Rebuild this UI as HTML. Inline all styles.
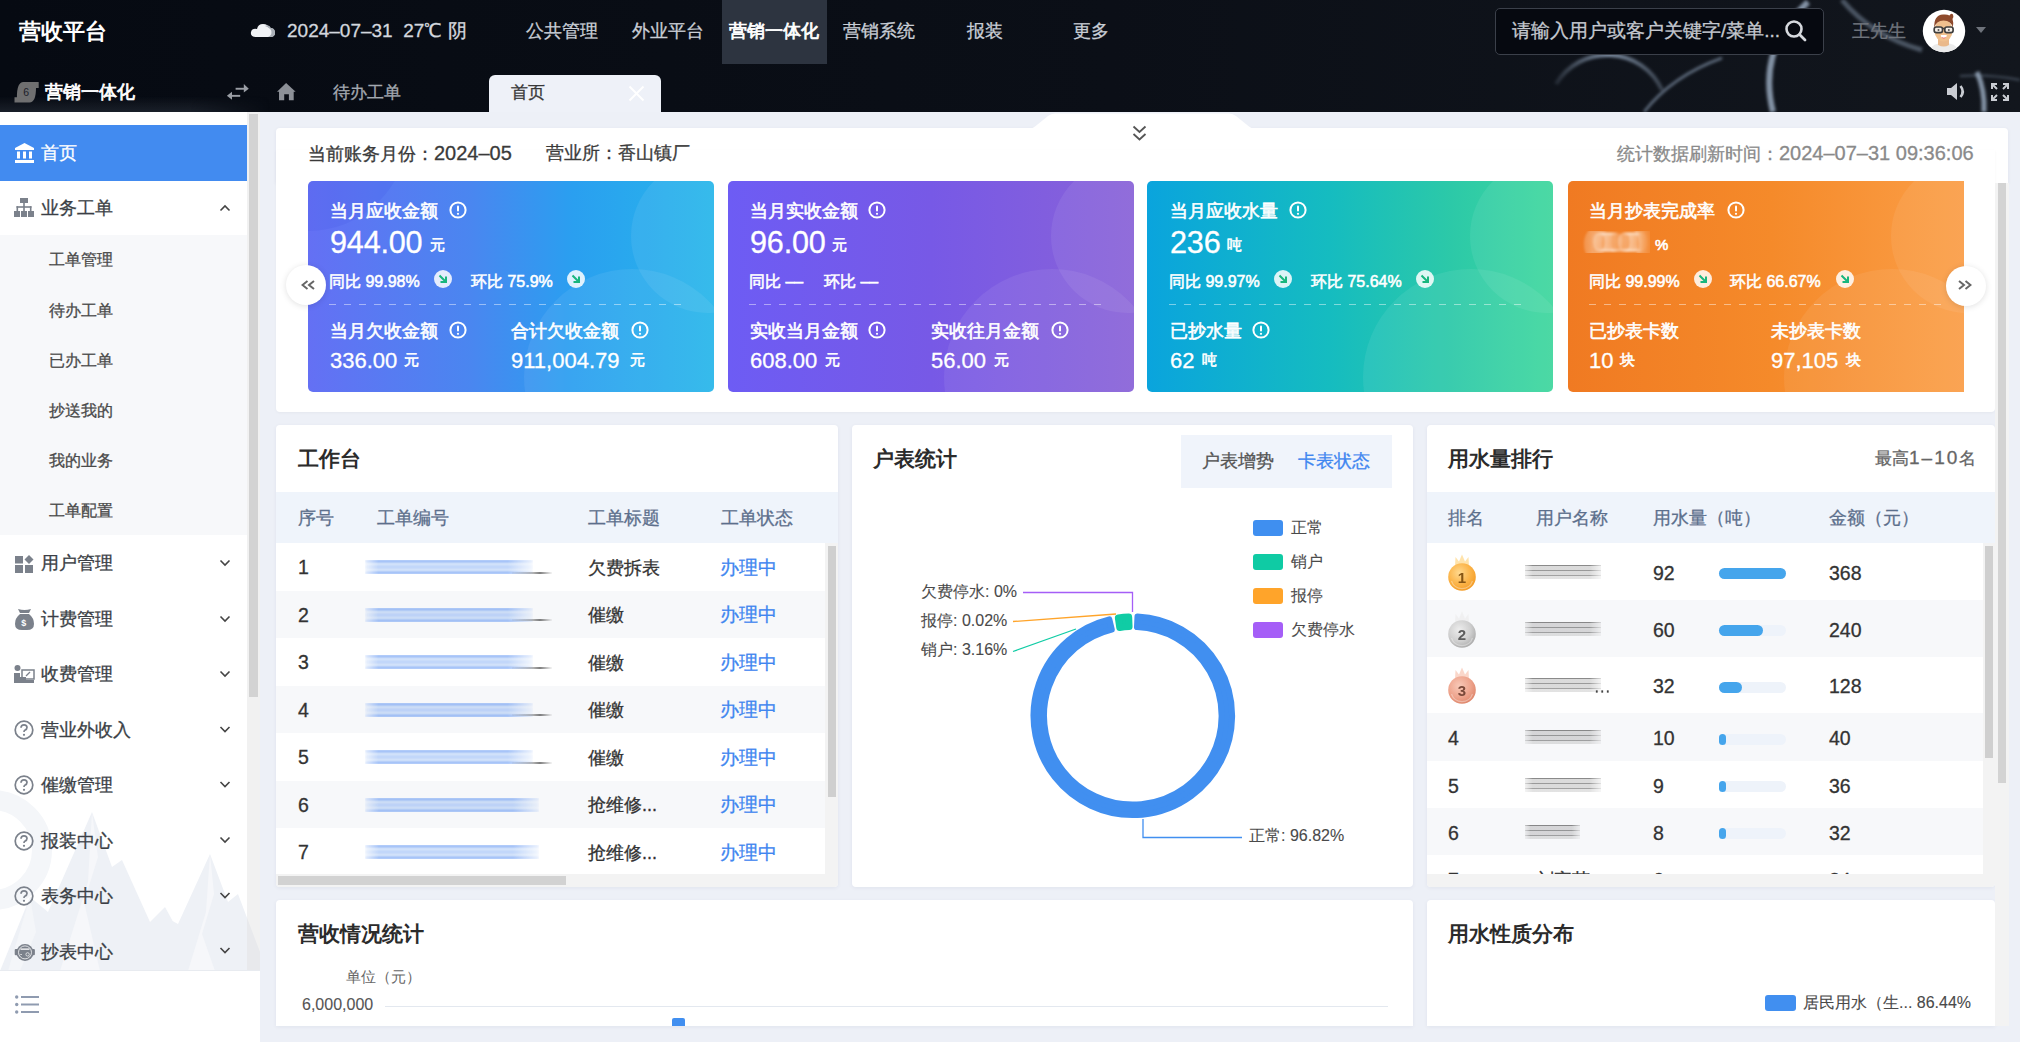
<!DOCTYPE html>
<html><head><meta charset="utf-8">
<style>
*{box-sizing:border-box;margin:0;padding:0}
html,body{width:2020px;height:1042px;overflow:hidden;background:#edf0f7;font-family:"Liberation Sans",sans-serif;color:#333;-webkit-text-stroke-width:0.3px}
.a{position:absolute}
.t{position:absolute;white-space:nowrap;line-height:1}
#hdr{position:absolute;left:0;top:0;width:2020px;height:112px;background:#070b13;overflow:hidden}
.nav{color:#c9ced6;font-size:18px}
#side{position:absolute;left:0;top:112px;width:260px;height:930px;background:#fff;overflow:hidden}
.mi{position:absolute;left:0;width:247px;height:56px}
.mi .tx{position:absolute;left:41px;top:0;line-height:56px;font-size:18px;color:#3b3b3b}
.mi .chev{position:absolute;left:220px;top:24px;width:8px;height:8px;border-right:1.6px solid #555;border-bottom:1.6px solid #555;transform:rotate(45deg)}
.smi{position:absolute;left:49px;font-size:16px;color:#4a4a4a;line-height:20px}
.panel{position:absolute;background:#fff;border-radius:4px;box-shadow:0 1px 4px rgba(20,40,80,.06)}
.ptitle{position:absolute;font-size:20px;font-weight:bold;color:#2b2b2b;line-height:24px;white-space:nowrap;-webkit-text-stroke-width:0}
.card{position:absolute;top:181px;width:406px;height:211px;border-radius:5px;overflow:hidden;color:#fff}
.card .c1{position:absolute;border-radius:50%;background:rgba(255,255,255,.07)}
.ct{position:absolute;white-space:nowrap;line-height:1;color:#fff}
.lbl{font-size:18.4px;-webkit-text-stroke-width:0.6px}
.big{font-size:30.6px;letter-spacing:-0.2px}
.unit{font-size:15px;-webkit-text-stroke-width:0.6px}
.cmp{font-size:16px;-webkit-text-stroke-width:0.55px}
.val{font-size:22px}
.info{display:inline-block;width:17px;height:17px;border:2px solid #fff;border-radius:50%;position:absolute}
.info:after{content:"";position:absolute;left:5.5px;top:2.5px;width:2px;height:6px;background:#fff;border-radius:1px}
.info:before{content:"";position:absolute;left:5.5px;top:9.5px;width:2px;height:2px;background:#fff}
.arr{position:absolute;width:18px;height:18px;border-radius:50%;background:rgba(255,255,255,.82)}
.dash{position:absolute;height:1px;background-image:linear-gradient(90deg,rgba(255,255,255,.45) 50%,transparent 50%);background-size:15px 1px}
</style></head><body>
<!-- HEADER -->
<div id="hdr">
 <svg class="a" style="left:0;top:0" width="2020" height="112">
  <defs>
   <linearGradient id="hbg" x1="0" x2="1" y1="0" y2="0"><stop offset="0" stop-color="#060a12"/><stop offset=".55" stop-color="#0b0f17"/><stop offset="1" stop-color="#12161d"/></linearGradient>
   <filter id="sb" x="-20%" y="-20%" width="140%" height="140%"><feGaussianBlur stdDeviation="1.5"/></filter>
   <linearGradient id="g1" x1="0" y1="0" x2="1" y2="0"><stop offset="0" stop-color="#9fb3cc" stop-opacity=".15"/><stop offset=".5" stop-color="#9fb3cc" stop-opacity=".8"/><stop offset="1" stop-color="#9fb3cc" stop-opacity=".3"/></linearGradient>
   <linearGradient id="g2" x1="0" y1="0" x2="1" y2="0"><stop offset="0" stop-color="#a9bcd3" stop-opacity=".9"/><stop offset=".45" stop-color="#a9bcd3" stop-opacity=".05"/><stop offset="1" stop-color="#a9bcd3" stop-opacity=".7"/></linearGradient>
  </defs>
  <rect width="2020" height="112" fill="url(#hbg)"/>
  <defs><linearGradient id="hb2" x1="0" y1="0" x2="0" y2="1"><stop offset="0" stop-color="#2a313c" stop-opacity="0"/><stop offset="1" stop-color="#2a313c" stop-opacity=".55"/></linearGradient><linearGradient id="hb3" x1="0" y1="0" x2="1" y2="0"><stop offset="0" stop-color="#fff"/><stop offset=".7" stop-color="#fff"/><stop offset="1" stop-color="#fff" stop-opacity="0"/></linearGradient><mask id="hbm"><rect x="0" y="96" width="270" height="16" fill="url(#hb3)"/></mask></defs>
  <rect x="0" y="96" width="270" height="16" fill="url(#hb2)" mask="url(#hbm)"/>
  <g filter="url(#sb)" fill="none">
   <path d="M1556 84 A60 60 0 0 1 1662 90" stroke="url(#g1)" stroke-width="4"/>
   <path d="M1644 112 Q1672 76 1722 58" stroke="#9aaec6" stroke-opacity=".6" stroke-width="2.5"/>
   <path d="M1773 112 Q1757 48 1808 2" stroke="#a9bcd3" stroke-opacity=".75" stroke-width="6"/>
   <path d="M1984 112 Q1985 90 1977 72" stroke="#a9bcd3" stroke-opacity=".75" stroke-width="5"/>
   <path d="M1842 0 Q1872 36 1922 50" stroke="#9fb3cc" stroke-opacity=".4" stroke-width="5"/>
   <path d="M1960 76 Q1990 74 2020 80" stroke="#9fb3cc" stroke-opacity=".35" stroke-width="2"/>
  </g>
 </svg>
 <div class="t" style="left:19px;top:20px;font-size:22px;font-weight:bold;color:#fff;line-height:24px;-webkit-text-stroke-width:0">营收平台</div>
 <svg class="a" style="left:250px;top:21px" width="26" height="18" viewBox="0 0 26 18"><path d="M6 16 Q0 16 1 11 Q2 7 7 8 Q8 3 13 3 Q18 3 19 7 Q25 7 25 12 Q25 16 20 16Z" fill="#f0f2f5"/><path d="M15 5 Q19 3 21 7 Q25 7 25 12 Q25 16 20 16 L18 16 Q23 14 21 9 Q19 6 15 5Z" fill="#aab0b8"/></svg>
 <div class="t nav" style="left:287px;top:20px;font-size:19px;line-height:22px;color:#d3d7de">2024–07–31&nbsp; 27℃ 阴</div>
 <div class="t nav" style="left:526px;top:20px;line-height:22px">公共管理</div>
 <div class="t nav" style="left:632px;top:20px;line-height:22px">外业平台</div>
 <div class="a" style="left:722px;top:0;width:105px;height:64px;background:#2d3440"></div>
 <div class="t nav" style="left:729px;top:20px;line-height:22px;color:#fff;-webkit-text-stroke-width:0.8px">营销一体化</div>
 <div class="t nav" style="left:843px;top:20px;line-height:22px">营销系统</div>
 <div class="t nav" style="left:967px;top:20px;line-height:22px">报装</div>
 <div class="t nav" style="left:1073px;top:20px;line-height:22px">更多</div>
 <div class="a" style="left:1495px;top:8px;width:329px;height:47px;border:1px solid #3b404a;border-radius:5px;background:#060910"></div>
 <div class="t" style="left:1512px;top:20px;font-size:19px;line-height:22px;color:#c4c8cf">请输入用户或客户关键字/菜单...</div>
 <svg class="a" style="left:1784px;top:19px" width="24" height="24" viewBox="0 0 24 24"><circle cx="10" cy="10" r="7.5" stroke="#d6d9de" stroke-width="2.6" fill="none"/><path d="M15.5 15.5 L21 21" stroke="#d6d9de" stroke-width="2.8" stroke-linecap="round"/></svg>
 <div class="t" style="left:1852px;top:20px;font-size:18px;line-height:22px;color:#6f747c">王先生</div>
 <svg class="a" style="left:1922px;top:9px" width="44" height="44" viewBox="0 0 44 44">
  <defs><clipPath id="avc"><circle cx="22" cy="22" r="21.2"/></clipPath></defs><circle cx="22" cy="22" r="21.2" fill="#fff"/><g clip-path="url(#avc)">
  <path d="M8 41 Q10 34 22 34 Q34 34 36 41 Q30 44 22 44 Q14 44 8 41Z" fill="#ebebeb"/>
  <path d="M16 30 H27 V36 Q22 39 16 36Z" fill="#eab98b"/>
  <ellipse cx="21.5" cy="21.5" rx="9" ry="11" fill="#f0c08e"/>
  <path d="M12.3 19 Q11.5 6 21 5.5 Q25 5 27.5 6.5 Q29 3.5 31 5.5 Q32 8 30.5 10 Q32 14 30.8 19 Q29.5 11.5 21.5 11.5 Q14 11.5 12.3 19Z" fill="#8e4a2c"/>
  <rect x="12.2" y="18" width="8.3" height="5.6" rx="2.2" fill="#f7efe6" stroke="#3e3e3e" stroke-width="1.7"/>
  <rect x="22.8" y="18" width="8.3" height="5.6" rx="2.2" fill="#f7efe6" stroke="#3e3e3e" stroke-width="1.7"/>
  <path d="M20.5 19.5 H22.8" stroke="#3e3e3e" stroke-width="1.5"/>
  <circle cx="16.5" cy="21" r="1" fill="#555"/><circle cx="26.8" cy="21" r="1" fill="#555"/>
  <path d="M18.8 26 H24.8 Q24.5 29.2 21.8 29.2 Q19 29.2 18.8 26Z" fill="#fff"/>
  <path d="M19.3 27.8 Q21.8 29.8 24.3 27.8 Q23.5 29.4 21.8 29.4 Q20 29.4 19.3 27.8Z" fill="#e8454f"/></g>
 </svg>
 <div class="a" style="left:1976px;top:27px;width:0;height:0;border-left:5.5px solid transparent;border-right:5.5px solid transparent;border-top:6px solid #6e737b"></div>
 <!-- second row -->
 <svg class="a" style="left:14px;top:82px" width="26" height="21" viewBox="0 0 26 21"><path d="M9.4 0 H24.7 V6 H22 Q22 20.4 15.5 20.4 H0.5 V15.2 H2.9 Q2.9 0 9.4 0Z" fill="#6f6f70"/><text x="12.2" y="14.3" text-anchor="middle" font-size="10.5" fill="#1b202a" font-family="Liberation Sans">6</text></svg>
 <div class="t" style="left:45px;top:81px;font-size:18.3px;color:#fff;line-height:22px;-webkit-text-stroke-width:0.8px">营销一体化</div>
 <svg class="a" style="left:226px;top:83px" width="24" height="18" viewBox="0 0 24 18" fill="#9a9ea5"><rect x="9.6" y="4.8" width="10" height="1.9"/><path d="M17.8 1.1 L22.8 5.7 L17.8 9.6Z"/><rect x="5.9" y="11.9" width="8.3" height="1.9"/><path d="M6 8.8 L0.9 12.8 L6 16.8Z"/></svg>
 <svg class="a" style="left:277px;top:83px" width="19" height="18" viewBox="0 0 19 18" fill="#8c9097"><path d="M9.1 0 L18.6 8.8 H0Z"/><path d="M2 8 H16.7 V17.2 H11.9 V11.2 H7.2 V17.2 H2Z"/></svg>
 <div class="t" style="left:333px;top:82px;font-size:17px;line-height:22px;color:#a3a8b0">待办工单</div>
 <div class="a" style="left:489px;top:75px;width:172px;height:37px;background:#eef1f8;border-radius:6px 6px 0 0"></div>
 <div class="t" style="left:511px;top:82px;font-size:17px;line-height:22px;color:#383838">首页</div>
 <svg class="a" style="left:628px;top:85px" width="17" height="17" viewBox="0 0 17 17"><path d="M1.5 1.5 L15.5 15.5 M15.5 1.5 L1.5 15.5" stroke="#fff" stroke-width="2"/></svg>
 <svg class="a" style="left:1946px;top:82px" width="21" height="19" viewBox="0 0 21 19"><path d="M1 6 H5 L11 1 V18 L5 13 H1Z" fill="#c9ccd2"/><path d="M14.5 4 Q19 9.5 14.5 15" stroke="#c9ccd2" stroke-width="2.6" fill="none"/></svg>
 <svg class="a" style="left:1991px;top:83px" width="18" height="18" viewBox="0 0 18 18" stroke="#c9ccd2" stroke-width="2" fill="none"><path d="M1 6 V1 H6 M1 1 L6 6"/><path d="M12 1 H17 V6 M17 1 L12 6"/><path d="M1 12 V17 H6 M1 17 L6 12"/><path d="M17 12 V17 H12 M17 17 L12 12"/></svg>
</div>
<!-- SIDEBAR -->
<div id="side">
 <svg class="a" style="left:0;top:560px" width="260" height="299" viewBox="0 0 260 299">
  <circle cx="-8" cy="178" r="50" stroke="#f4f6f9" stroke-width="20" fill="none"/>
  <path d="M0 299 L30 225 L48 240 L92 140 L112 195 L122 188 L150 250 L165 235 L200 299Z" fill="#eef1f6"/>
  <path d="M130 299 L165 245 L178 252 L210 182 L228 230 L238 222 L260 280 L260 299Z" fill="#eef1f6"/>
  <path d="M92 140 L98 185 L84 230 L100 299 L60 299 L88 210Z" fill="#f6f7fa"/>
  <path d="M210 182 L214 222 L202 262 L215 299 L188 299 L206 240Z" fill="#f6f7fa"/>
  <path d="M30 225 L36 260 L20 299 L8 299Z" fill="#f4f6f9"/>
 </svg>
 <div class="a" style="left:0;top:13px;width:247px;height:56px;background:#428bf0"></div>
 <svg class="a" style="left:15px;top:31px" width="19" height="20" viewBox="0 0 19 20"><path d="M9.5 0 L19 5 V7 H0 V5Z" fill="#fff"/><rect x="2" y="8.5" width="3" height="7" fill="#fff"/><rect x="8" y="8.5" width="3" height="7" fill="#fff"/><rect x="14" y="8.5" width="3" height="7" fill="#fff"/><rect x="0" y="17" width="19" height="3" fill="#fff"/></svg>
 <div class="t" style="left:41px;top:30px;font-size:18.2px;line-height:22px;color:#fff">首页</div>
 <!-- 业务工单 -->
 <svg class="a" style="left:14px;top:86px" width="20" height="19" viewBox="0 0 20 19" fill="#7b818b"><rect x="6" y="0" width="8" height="5"/><rect x="9.2" y="5" width="1.6" height="4"/><rect x="2.5" y="8.2" width="15" height="1.6"/><rect x="2.5" y="8.2" width="1.6" height="5"/><rect x="15.9" y="8.2" width="1.6" height="5"/><rect x="9.2" y="8.2" width="1.6" height="5"/><rect x="0" y="13" width="6" height="6"/><rect x="7" y="13" width="6" height="6"/><rect x="14" y="13" width="6" height="6"/></svg>
 <div class="t" style="left:41px;top:85px;font-size:18.2px;line-height:22px;color:#3b3f46">业务工单</div>
 <svg class="a" style="left:219px;top:92px" width="12" height="8" viewBox="0 0 12 8"><path d="M1.5 6.5 L6 2 L10.5 6.5" stroke="#444" stroke-width="1.6" fill="none"/></svg>
 <div class="a" style="left:0;top:123px;width:247px;height:300px;background:#f7f8fa"></div>
 <div class="smi" style="top:138px">工单管理</div>
 <div class="smi" style="top:189px">待办工单</div>
 <div class="smi" style="top:239px">已办工单</div>
 <div class="smi" style="top:289px">抄送我的</div>
 <div class="smi" style="top:339px">我的业务</div>
 <div class="smi" style="top:389px">工单配置</div>
 <!-- 用户管理 -->
 <svg class="a" style="left:15px;top:443px" width="19" height="18" viewBox="0 0 19 18" fill="#7b818b"><rect x="0" y="1" width="8" height="7.5"/><rect x="0" y="10" width="8" height="8"/><rect x="10" y="10" width="8" height="8"/><path d="M14 0 L18.5 4.5 L14 9 L9.5 4.5Z"/></svg>
 <div class="t" style="left:41px;top:440px;font-size:18.2px;line-height:22px;color:#3b3f46">用户管理</div>
 <!-- 计费管理 -->
 <svg class="a" style="left:15px;top:497px" width="19" height="21" viewBox="0 0 19 21" fill="#7b818b"><path d="M3 0 Q9.5 2 16 0 L14 4 H5Z"/><path d="M5 5 H14 Q19 9 19 15 Q19 21 12 21 H7 Q0 21 0 15 Q0 9 5 5Z"/><text x="6.2" y="17" font-size="9" font-weight="bold" fill="#fff" font-family="Liberation Sans">$</text></svg>
 <div class="t" style="left:41px;top:496px;font-size:18.2px;line-height:22px;color:#3b3f46">计费管理</div>
 <!-- 收费管理 -->
 <svg class="a" style="left:14px;top:553px" width="21" height="18" viewBox="0 0 21 18" fill="#7b818b"><circle cx="3.5" cy="3" r="3"/><path d="M0 8 H6 V12 H12 V15 H20 V18 H0Z"/><rect x="8" y="5" width="12" height="9" fill="none" stroke="#7b818b" stroke-width="1.5"/><path d="M12 11 L16 7" stroke="#7b818b" stroke-width="1.3"/></svg>
 <div class="t" style="left:41px;top:551px;font-size:18.2px;line-height:22px;color:#3b3f46">收费管理</div>
 <!-- question icons -->
 <svg class="a" style="left:14px;top:608px" width="20" height="20" viewBox="0 0 20 20"><circle cx="10" cy="10" r="8.8" stroke="#7b818b" stroke-width="1.7" fill="none"/><path d="M7 7.8 Q7 4.8 10 4.8 Q13 4.8 13 7.5 Q13 9.3 10.8 10.2 Q10 10.6 10 12" stroke="#7b818b" stroke-width="1.7" fill="none"/><circle cx="10" cy="14.8" r="1.1" fill="#7b818b"/></svg>
 <div class="t" style="left:41px;top:607px;font-size:18.2px;line-height:22px;color:#3b3f46">营业外收入</div>
 <svg class="a" style="left:14px;top:663px" width="20" height="20" viewBox="0 0 20 20"><circle cx="10" cy="10" r="8.8" stroke="#7b818b" stroke-width="1.7" fill="none"/><path d="M7 7.8 Q7 4.8 10 4.8 Q13 4.8 13 7.5 Q13 9.3 10.8 10.2 Q10 10.6 10 12" stroke="#7b818b" stroke-width="1.7" fill="none"/><circle cx="10" cy="14.8" r="1.1" fill="#7b818b"/></svg>
 <div class="t" style="left:41px;top:662px;font-size:18.2px;line-height:22px;color:#3b3f46">催缴管理</div>
 <svg class="a" style="left:14px;top:719px" width="20" height="20" viewBox="0 0 20 20"><circle cx="10" cy="10" r="8.8" stroke="#7b818b" stroke-width="1.7" fill="none"/><path d="M7 7.8 Q7 4.8 10 4.8 Q13 4.8 13 7.5 Q13 9.3 10.8 10.2 Q10 10.6 10 12" stroke="#7b818b" stroke-width="1.7" fill="none"/><circle cx="10" cy="14.8" r="1.1" fill="#7b818b"/></svg>
 <div class="t" style="left:41px;top:718px;font-size:18.2px;line-height:22px;color:#3b3f46">报装中心</div>
 <svg class="a" style="left:14px;top:774px" width="20" height="20" viewBox="0 0 20 20"><circle cx="10" cy="10" r="8.8" stroke="#7b818b" stroke-width="1.7" fill="none"/><path d="M7 7.8 Q7 4.8 10 4.8 Q13 4.8 13 7.5 Q13 9.3 10.8 10.2 Q10 10.6 10 12" stroke="#7b818b" stroke-width="1.7" fill="none"/><circle cx="10" cy="14.8" r="1.1" fill="#7b818b"/></svg>
 <div class="t" style="left:41px;top:773px;font-size:18.2px;line-height:22px;color:#3b3f46">表务中心</div>
 <svg class="a" style="left:14px;top:831px" width="21" height="19" viewBox="0 0 21 19"><rect x="0.7" y="6" width="20.2" height="6.2" rx="1" fill="#7b818b"/><circle cx="11" cy="9.4" r="8.5" fill="#7b818b"/><circle cx="11" cy="9.4" r="6.5" stroke="#fff" stroke-opacity=".85" stroke-width=".9" fill="none"/><rect x="6.5" y="5.4" width="9" height="1.5" fill="#fff" fill-opacity=".85"/><circle cx="13.6" cy="11.4" r="1.7" stroke="#fff" stroke-opacity=".85" stroke-width=".8" fill="none"/><rect x="6.3" y="11" width="1.6" height="0.9" fill="#fff" fill-opacity=".8"/></svg>
 <div class="t" style="left:41px;top:829px;font-size:18.2px;line-height:22px;color:#3b3f46">抄表中心</div>
 <!-- chevrons -->
 <svg class="a" style="left:219px;top:447px" width="12" height="232" viewBox="0 0 12 232" stroke="#444" stroke-width="1.6" fill="none">
  <path d="M1.5 1.5 L6 6 L10.5 1.5"/><path d="M1.5 57.5 L6 62 L10.5 57.5"/><path d="M1.5 112.5 L6 117 L10.5 112.5"/><path d="M1.5 168 L6 172.5 L10.5 168"/><path d="M1.5 223 L6 227.5 L10.5 223"/>
 </svg>
 <svg class="a" style="left:219px;top:724px" width="12" height="232" viewBox="0 0 12 232" stroke="#444" stroke-width="1.6" fill="none">
  <path d="M1.5 1.5 L6 6 L10.5 1.5"/><path d="M1.5 57 L6 61.5 L10.5 57"/><path d="M1.5 112 L6 116.5 L10.5 112"/>
 </svg>
 <div class="a" style="left:0;top:858px;width:260px;height:72px;background:#fff;border-top:1px solid #e8ebf0"></div>
 <svg class="a" style="left:15px;top:883px" width="24" height="19" viewBox="0 0 24 19" fill="#8f9bb0"><circle cx="1.7" cy="2" r="1.7"/><circle cx="1.7" cy="9.5" r="1.7"/><circle cx="1.7" cy="17" r="1.7"/><rect x="6" y="1" width="18" height="2"/><rect x="6" y="8.5" width="18" height="2"/><rect x="6" y="16" width="18" height="2"/></svg>
 <div class="a" style="left:247px;top:0;width:13px;height:858px;background:rgba(225,225,225,.45)"></div>
 <div class="a" style="left:249px;top:2px;width:9px;height:583px;background:#d3d3d3"></div>
</div>
<!-- MAIN -->
<div id="main">
 <!-- top panel -->
 <div class="panel" style="left:276px;top:128px;width:1732px;height:55px;border-radius:4px 4px 0 0"></div>
 <div class="panel" style="left:276px;top:150px;width:1719px;height:262px;border-radius:0 0 4px 4px;box-shadow:0 1px 3px rgba(0,0,0,.04)"></div>
 <svg class="a" style="left:1028px;top:112px" width="228" height="17" viewBox="0 0 228 17"><path d="M0 17 Q4 17 7 14.5 L20 4 Q23 1.5 27 1.5 H201 Q205 1.5 208 4 L221 14.5 Q224 17 228 17Z" fill="#fff"/></svg>
 <svg class="a" style="left:1132px;top:125px" width="15" height="17" viewBox="0 0 15 17" stroke="#555" stroke-width="1.8" fill="none"><path d="M1.5 1.5 L7.5 7 L13.5 1.5"/><path d="M1.5 9 L7.5 14.5 L13.5 9"/></svg>
 <div class="t" style="left:308px;top:142px;font-size:18px;line-height:22px;color:#3a3a3a">当前账务月份：<span style="font-size:20px">2024–05</span></div>
 <div class="t" style="left:546px;top:142px;font-size:18px;line-height:22px;color:#3a3a3a">营业所：香山镇厂</div>
 <div class="t" style="left:1617px;top:142px;font-size:18px;line-height:22px;color:#8a8a8a">统计数据刷新时间：<span style="font-size:20px">2024–07–31 09:36:06</span></div>
 <!-- cards -->
 <div class="a" style="left:276px;top:181px;width:1688px;height:211px;overflow:hidden">
 <div class="card" style="left:32px;top:0;background:linear-gradient(90deg,#6470f4 0%,#4a86f0 40%,#2a9ff0 65%,#27b6ea 100%)">
  <div class="c1" style="left:323px;top:-22px;width:154px;height:154px"></div>
  <div class="c1" style="left:216px;top:88px;width:216px;height:216px"></div>
  <div class="c1" style="left:-100px;top:-150px;width:200px;height:200px;background:rgba(60,80,230,.15)"></div>
 </div>
 <div class="card" style="left:452px;top:0;background:linear-gradient(90deg,#6d5cf4 0%,#7759e6 50%,#8962d8 100%)">
  <div class="c1" style="left:323px;top:-22px;width:154px;height:154px"></div>
  <div class="c1" style="left:216px;top:88px;width:216px;height:216px"></div>
 </div>
 <div class="card" style="left:871px;top:0;background:linear-gradient(90deg,#0aa4dd 0%,#15bcc0 45%,#2cc9a8 75%,#3fd79e 100%)">
  <div class="c1" style="left:323px;top:-22px;width:154px;height:154px"></div>
  <div class="c1" style="left:216px;top:88px;width:216px;height:216px"></div>
 </div>
 <div class="card" style="left:1292px;top:0;background:linear-gradient(90deg,#f07a22 0%,#f58a2a 50%,#fb9f48 100%)">
  <div class="c1" style="left:323px;top:-22px;width:154px;height:154px"></div>
  <div class="c1" style="left:216px;top:88px;width:216px;height:216px"></div>
 </div>
 </div>
 <!-- card texts -->
 <div id="cardtext">
<div class="ct lbl" style="left:330px;top:202px;">当月应收金额</div>
<svg class="a" style="left:449px;top:201px" width="18" height="18" viewBox="0 0 18 18"><circle cx="9" cy="9" r="7.6" stroke="#fff" stroke-width="2" fill="none"/><rect x="8" y="4.5" width="2" height="6" rx="1" fill="#fff"/><circle cx="9" cy="12.8" r="1.1" fill="#fff"/></svg>
<div class="ct big" style="left:330px;top:227px;">944.00</div>
<div class="ct unit" style="left:430px;top:238px;margin-top:-1px">元</div>
<div class="ct cmp" style="left:329px;top:273.8px;">同比 99.98%</div>
<svg class="a" style="left:434px;top:270px" width="18" height="18" viewBox="0 0 18 18"><circle cx="9" cy="9" r="9" fill="rgba(255,255,255,.85)"/><path d="M5.5 5.5 L11.5 11.5 M12 6.5 V12 H6.5" stroke="#19b67e" stroke-width="2" fill="none"/></svg>
<div class="ct cmp" style="left:471px;top:273.8px;">环比 75.9%</div>
<svg class="a" style="left:567px;top:270px" width="18" height="18" viewBox="0 0 18 18"><circle cx="9" cy="9" r="9" fill="rgba(255,255,255,.85)"/><path d="M5.5 5.5 L11.5 11.5 M12 6.5 V12 H6.5" stroke="#19b67e" stroke-width="2" fill="none"/></svg>
<div class="dash" style="left:329px;top:304px;width:357px"></div>
<div class="ct lbl" style="left:330px;top:322px;">当月欠收金额</div>
<svg class="a" style="left:449px;top:321px" width="18" height="18" viewBox="0 0 18 18"><circle cx="9" cy="9" r="7.6" stroke="#fff" stroke-width="2" fill="none"/><rect x="8" y="4.5" width="2" height="6" rx="1" fill="#fff"/><circle cx="9" cy="12.8" r="1.1" fill="#fff"/></svg>
<div class="ct lbl" style="left:511px;top:322px;">合计欠收金额</div>
<svg class="a" style="left:631px;top:321px" width="18" height="18" viewBox="0 0 18 18"><circle cx="9" cy="9" r="7.6" stroke="#fff" stroke-width="2" fill="none"/><rect x="8" y="4.5" width="2" height="6" rx="1" fill="#fff"/><circle cx="9" cy="12.8" r="1.1" fill="#fff"/></svg>
<div class="ct val" style="left:330px;top:350px;">336.00</div>
<div class="ct unit" style="left:404px;top:353px;margin-top:-1px">元</div>
<div class="ct val" style="left:511px;top:350px;">911,004.79</div>
<div class="ct unit" style="left:630px;top:353px;margin-top:-1px">元</div>
<div class="ct lbl" style="left:750px;top:202px;">当月实收金额</div>
<svg class="a" style="left:868px;top:201px" width="18" height="18" viewBox="0 0 18 18"><circle cx="9" cy="9" r="7.6" stroke="#fff" stroke-width="2" fill="none"/><rect x="8" y="4.5" width="2" height="6" rx="1" fill="#fff"/><circle cx="9" cy="12.8" r="1.1" fill="#fff"/></svg>
<div class="ct big" style="left:750px;top:227px;">96.00</div>
<div class="ct unit" style="left:832px;top:238px;margin-top:-1px">元</div>
<div class="ct cmp" style="left:749px;top:273.8px;">同比 ––</div>
<div class="ct cmp" style="left:824px;top:273.8px;">环比 ––</div>
<div class="dash" style="left:749px;top:304px;width:357px"></div>
<div class="ct lbl" style="left:750px;top:322px;">实收当月金额</div>
<svg class="a" style="left:868px;top:321px" width="18" height="18" viewBox="0 0 18 18"><circle cx="9" cy="9" r="7.6" stroke="#fff" stroke-width="2" fill="none"/><rect x="8" y="4.5" width="2" height="6" rx="1" fill="#fff"/><circle cx="9" cy="12.8" r="1.1" fill="#fff"/></svg>
<div class="ct lbl" style="left:931px;top:322px;">实收往月金额</div>
<svg class="a" style="left:1051px;top:321px" width="18" height="18" viewBox="0 0 18 18"><circle cx="9" cy="9" r="7.6" stroke="#fff" stroke-width="2" fill="none"/><rect x="8" y="4.5" width="2" height="6" rx="1" fill="#fff"/><circle cx="9" cy="12.8" r="1.1" fill="#fff"/></svg>
<div class="ct val" style="left:750px;top:350px;">608.00</div>
<div class="ct unit" style="left:825px;top:353px;margin-top:-1px">元</div>
<div class="ct val" style="left:931px;top:350px;">56.00</div>
<div class="ct unit" style="left:994px;top:353px;margin-top:-1px">元</div>
<div class="ct lbl" style="left:1170px;top:202px;">当月应收水量</div>
<svg class="a" style="left:1289px;top:201px" width="18" height="18" viewBox="0 0 18 18"><circle cx="9" cy="9" r="7.6" stroke="#fff" stroke-width="2" fill="none"/><rect x="8" y="4.5" width="2" height="6" rx="1" fill="#fff"/><circle cx="9" cy="12.8" r="1.1" fill="#fff"/></svg>
<div class="ct big" style="left:1170px;top:227px;">236</div>
<div class="ct unit" style="left:1227px;top:238px;margin-top:-1px">吨</div>
<div class="ct cmp" style="left:1169px;top:273.8px;">同比 99.97%</div>
<svg class="a" style="left:1274px;top:270px" width="18" height="18" viewBox="0 0 18 18"><circle cx="9" cy="9" r="9" fill="rgba(255,255,255,.85)"/><path d="M5.5 5.5 L11.5 11.5 M12 6.5 V12 H6.5" stroke="#19b67e" stroke-width="2" fill="none"/></svg>
<div class="ct cmp" style="left:1311px;top:273.8px;">环比 75.64%</div>
<svg class="a" style="left:1416px;top:270px" width="18" height="18" viewBox="0 0 18 18"><circle cx="9" cy="9" r="9" fill="rgba(255,255,255,.85)"/><path d="M5.5 5.5 L11.5 11.5 M12 6.5 V12 H6.5" stroke="#19b67e" stroke-width="2" fill="none"/></svg>
<div class="dash" style="left:1169px;top:304px;width:357px"></div>
<div class="ct lbl" style="left:1170px;top:322px;">已抄水量</div>
<svg class="a" style="left:1252px;top:321px" width="18" height="18" viewBox="0 0 18 18"><circle cx="9" cy="9" r="7.6" stroke="#fff" stroke-width="2" fill="none"/><rect x="8" y="4.5" width="2" height="6" rx="1" fill="#fff"/><circle cx="9" cy="12.8" r="1.1" fill="#fff"/></svg>
<div class="ct val" style="left:1170px;top:350px;">62</div>
<div class="ct unit" style="left:1202px;top:353px;margin-top:-1px">吨</div>
<div class="ct lbl" style="left:1589px;top:202px;">当月抄表完成率</div>
<svg class="a" style="left:1727px;top:201px" width="18" height="18" viewBox="0 0 18 18"><circle cx="9" cy="9" r="7.6" stroke="#fff" stroke-width="2" fill="none"/><rect x="8" y="4.5" width="2" height="6" rx="1" fill="#fff"/><circle cx="9" cy="12.8" r="1.1" fill="#fff"/></svg>
<div class="a" style="left:1582px;top:231px;width:68px;height:22px;overflow:hidden;-webkit-mask-image:linear-gradient(90deg,rgba(0,0,0,.5),#000 15%,#000 80%,rgba(0,0,0,.3))"><div style="position:absolute;left:6px;top:-4px;font-size:30px;line-height:30px;color:rgba(255,255,255,.35);-webkit-text-stroke-width:0;filter:blur(1px);text-shadow:-6px 0 1px rgba(255,255,255,.35),-3px 0 1px rgba(255,245,230,.4),3px 0 1px rgba(255,245,230,.4),6px 0 1px rgba(255,255,255,.3),9px 0 1px rgba(255,255,255,.2)">(0.0)</div></div>
<div class="ct unit" style="left:1655px;top:238px;margin-top:-1px">%</div>
<div class="ct cmp" style="left:1589px;top:273.8px;">同比 99.99%</div>
<svg class="a" style="left:1694px;top:270px" width="18" height="18" viewBox="0 0 18 18"><circle cx="9" cy="9" r="9" fill="rgba(255,255,255,.85)"/><path d="M5.5 5.5 L11.5 11.5 M12 6.5 V12 H6.5" stroke="#19b67e" stroke-width="2" fill="none"/></svg>
<div class="ct cmp" style="left:1730px;top:273.8px;">环比 66.67%</div>
<svg class="a" style="left:1836px;top:270px" width="18" height="18" viewBox="0 0 18 18"><circle cx="9" cy="9" r="9" fill="rgba(255,255,255,.85)"/><path d="M5.5 5.5 L11.5 11.5 M12 6.5 V12 H6.5" stroke="#19b67e" stroke-width="2" fill="none"/></svg>
<div class="dash" style="left:1589px;top:304px;width:357px"></div>
<div class="ct lbl" style="left:1589px;top:322px;">已抄表卡数</div>
<div class="ct lbl" style="left:1771px;top:322px;">未抄表卡数</div>
<div class="ct val" style="left:1589px;top:350px;">10</div>
<div class="ct unit" style="left:1620px;top:353px;margin-top:-1px">块</div>
<div class="ct val" style="left:1771px;top:350px;">97,105</div>
<div class="ct unit" style="left:1846px;top:353px;margin-top:-1px">块</div>
<div class="a" style="left:286px;top:265px;width:40px;height:40px;border-radius:50%;background:#fff;box-shadow:0 1px 6px rgba(0,0,0,.12)"></div>
<svg class="a" style="left:301px;top:279.5px" width="14" height="10" viewBox="0 0 14 10" stroke="#666" stroke-width="2" fill="none"><path d="M6.5 1 L1.5 5 L6.5 9"/><path d="M13 1 L8 5 L13 9"/></svg>
<div class="a" style="left:1946px;top:265.5px;width:40px;height:40px;border-radius:50%;background:#fff;box-shadow:0 1px 6px rgba(0,0,0,.12)"></div>
<svg class="a" style="left:1958px;top:279.5px" width="14" height="10" viewBox="0 0 14 10" stroke="#666" stroke-width="2" fill="none"><path d="M1 1 L6 5 L1 9"/><path d="M7.5 1 L12.5 5 L7.5 9"/></svg>
</div><!--/cardtext-->
<!--MID-->
<div class="panel" style="left:276px;top:425px;width:562px;height:462px"></div>
<div class="panel" style="left:852px;top:425px;width:561px;height:462px"></div>
<div class="panel" style="left:1427px;top:425px;width:568px;height:462px"></div>
<div class="panel" style="left:276px;top:900px;width:1137px;height:126px;border-radius:4px 4px 0 0"></div>
<div class="panel" style="left:1427px;top:900px;width:568px;height:126px;border-radius:4px 4px 0 0"></div>
<div class="ptitle" style="left:298px;top:447px;font-size:21px">工作台</div>
<div class="ptitle" style="left:873px;top:447px;font-size:21px">户表统计</div>
<div class="ptitle" style="left:1448px;top:447px;font-size:21px">用水量排行</div>
<div class="ptitle" style="left:298px;top:922px;font-size:21px">营收情况统计</div>
<div class="ptitle" style="left:1448px;top:922px;font-size:21px">用水性质分布</div>
<div class="a" style="left:276px;top:492px;width:562px;height:51px;background:#eff4fb"></div>
<div class="t" style="left:298px;top:507px;font-size:18px;line-height:22px;color:#5c6f8c">序号</div>
<div class="t" style="left:377px;top:507px;font-size:18px;line-height:22px;color:#5c6f8c">工单编号</div>
<div class="t" style="left:588px;top:507px;font-size:18px;line-height:22px;color:#5c6f8c">工单标题</div>
<div class="t" style="left:721px;top:507px;font-size:18px;line-height:22px;color:#5c6f8c">工单状态</div>
<div class="a" style="left:276px;top:543.0px;width:549px;height:47.5px;background:#fff"></div>
<div class="t" style="left:298px;top:556.25px;font-size:19.5px;line-height:22px;color:#333">1</div>
<div class="a" style="left:365px;top:560.25px;width:168px;height:14px;filter:blur(0.8px);background:linear-gradient(180deg,rgba(60,125,240,.65) 0 2px,rgba(110,160,240,.3) 2px 6px,rgba(80,140,240,.42) 6px 8px,rgba(110,160,240,.3) 8px 12px,rgba(60,125,240,.65) 12px 14px);-webkit-mask-image:linear-gradient(90deg,rgba(0,0,0,.3),#000 8%,#000 85%,rgba(0,0,0,.2))"></div>
<div class="a" style="left:512px;top:571.75px;width:40px;height:2px;filter:blur(.4px);background:linear-gradient(90deg,rgba(80,80,80,.05),rgba(60,60,60,.35) 50%,rgba(40,40,40,.6) 70%,rgba(80,80,80,.05))"></div>
<div class="t" style="left:588px;top:556.75px;font-size:18px;line-height:22px;color:#333">欠费拆表</div>
<div class="t" style="left:720px;top:556.75px;font-size:18.5px;line-height:22px;color:#3f86f0">办理中</div>
<div class="a" style="left:276px;top:590.5px;width:549px;height:47.5px;background:#f7f8fa"></div>
<div class="t" style="left:298px;top:603.75px;font-size:19.5px;line-height:22px;color:#333">2</div>
<div class="a" style="left:365px;top:607.75px;width:168px;height:14px;filter:blur(0.8px);background:linear-gradient(180deg,rgba(60,125,240,.65) 0 2px,rgba(110,160,240,.3) 2px 6px,rgba(80,140,240,.42) 6px 8px,rgba(110,160,240,.3) 8px 12px,rgba(60,125,240,.65) 12px 14px);-webkit-mask-image:linear-gradient(90deg,rgba(0,0,0,.3),#000 8%,#000 85%,rgba(0,0,0,.2))"></div>
<div class="a" style="left:512px;top:619.25px;width:40px;height:2px;filter:blur(.4px);background:linear-gradient(90deg,rgba(80,80,80,.05),rgba(60,60,60,.35) 50%,rgba(40,40,40,.6) 70%,rgba(80,80,80,.05))"></div>
<div class="t" style="left:588px;top:604.25px;font-size:18px;line-height:22px;color:#333">催缴</div>
<div class="t" style="left:720px;top:604.25px;font-size:18.5px;line-height:22px;color:#3f86f0">办理中</div>
<div class="a" style="left:276px;top:638.0px;width:549px;height:47.5px;background:#fff"></div>
<div class="t" style="left:298px;top:651.25px;font-size:19.5px;line-height:22px;color:#333">3</div>
<div class="a" style="left:365px;top:655.25px;width:168px;height:14px;filter:blur(0.8px);background:linear-gradient(180deg,rgba(60,125,240,.65) 0 2px,rgba(110,160,240,.3) 2px 6px,rgba(80,140,240,.42) 6px 8px,rgba(110,160,240,.3) 8px 12px,rgba(60,125,240,.65) 12px 14px);-webkit-mask-image:linear-gradient(90deg,rgba(0,0,0,.3),#000 8%,#000 85%,rgba(0,0,0,.2))"></div>
<div class="a" style="left:512px;top:666.75px;width:40px;height:2px;filter:blur(.4px);background:linear-gradient(90deg,rgba(80,80,80,.05),rgba(60,60,60,.35) 50%,rgba(40,40,40,.6) 70%,rgba(80,80,80,.05))"></div>
<div class="t" style="left:588px;top:651.75px;font-size:18px;line-height:22px;color:#333">催缴</div>
<div class="t" style="left:720px;top:651.75px;font-size:18.5px;line-height:22px;color:#3f86f0">办理中</div>
<div class="a" style="left:276px;top:685.5px;width:549px;height:47.5px;background:#f7f8fa"></div>
<div class="t" style="left:298px;top:698.75px;font-size:19.5px;line-height:22px;color:#333">4</div>
<div class="a" style="left:365px;top:702.75px;width:168px;height:14px;filter:blur(0.8px);background:linear-gradient(180deg,rgba(60,125,240,.65) 0 2px,rgba(110,160,240,.3) 2px 6px,rgba(80,140,240,.42) 6px 8px,rgba(110,160,240,.3) 8px 12px,rgba(60,125,240,.65) 12px 14px);-webkit-mask-image:linear-gradient(90deg,rgba(0,0,0,.3),#000 8%,#000 85%,rgba(0,0,0,.2))"></div>
<div class="a" style="left:512px;top:714.25px;width:40px;height:2px;filter:blur(.4px);background:linear-gradient(90deg,rgba(80,80,80,.05),rgba(60,60,60,.35) 50%,rgba(40,40,40,.6) 70%,rgba(80,80,80,.05))"></div>
<div class="t" style="left:588px;top:699.25px;font-size:18px;line-height:22px;color:#333">催缴</div>
<div class="t" style="left:720px;top:699.25px;font-size:18.5px;line-height:22px;color:#3f86f0">办理中</div>
<div class="a" style="left:276px;top:733.0px;width:549px;height:47.5px;background:#fff"></div>
<div class="t" style="left:298px;top:746.25px;font-size:19.5px;line-height:22px;color:#333">5</div>
<div class="a" style="left:365px;top:750.25px;width:168px;height:14px;filter:blur(0.8px);background:linear-gradient(180deg,rgba(60,125,240,.65) 0 2px,rgba(110,160,240,.3) 2px 6px,rgba(80,140,240,.42) 6px 8px,rgba(110,160,240,.3) 8px 12px,rgba(60,125,240,.65) 12px 14px);-webkit-mask-image:linear-gradient(90deg,rgba(0,0,0,.3),#000 8%,#000 85%,rgba(0,0,0,.2))"></div>
<div class="a" style="left:512px;top:761.75px;width:40px;height:2px;filter:blur(.4px);background:linear-gradient(90deg,rgba(80,80,80,.05),rgba(60,60,60,.35) 50%,rgba(40,40,40,.6) 70%,rgba(80,80,80,.05))"></div>
<div class="t" style="left:588px;top:746.75px;font-size:18px;line-height:22px;color:#333">催缴</div>
<div class="t" style="left:720px;top:746.75px;font-size:18.5px;line-height:22px;color:#3f86f0">办理中</div>
<div class="a" style="left:276px;top:780.5px;width:549px;height:47.5px;background:#f7f8fa"></div>
<div class="t" style="left:298px;top:793.75px;font-size:19.5px;line-height:22px;color:#333">6</div>
<div class="a" style="left:365px;top:797.75px;width:174px;height:14px;filter:blur(0.8px);background:linear-gradient(180deg,rgba(60,125,240,.65) 0 2px,rgba(110,160,240,.3) 2px 6px,rgba(80,140,240,.42) 6px 8px,rgba(110,160,240,.3) 8px 12px,rgba(60,125,240,.65) 12px 14px);-webkit-mask-image:linear-gradient(90deg,rgba(0,0,0,.3),#000 8%,#000 85%,rgba(0,0,0,.2))"></div>
<div class="t" style="left:588px;top:794.25px;font-size:18px;line-height:22px;color:#333">抢维修...</div>
<div class="t" style="left:720px;top:794.25px;font-size:18.5px;line-height:22px;color:#3f86f0">办理中</div>
<div class="a" style="left:276px;top:828.0px;width:549px;height:47.5px;background:#fff"></div>
<div class="t" style="left:298px;top:841.25px;font-size:19.5px;line-height:22px;color:#333">7</div>
<div class="a" style="left:365px;top:845.25px;width:174px;height:14px;filter:blur(0.8px);background:linear-gradient(180deg,rgba(60,125,240,.65) 0 2px,rgba(110,160,240,.3) 2px 6px,rgba(80,140,240,.42) 6px 8px,rgba(110,160,240,.3) 8px 12px,rgba(60,125,240,.65) 12px 14px);-webkit-mask-image:linear-gradient(90deg,rgba(0,0,0,.3),#000 8%,#000 85%,rgba(0,0,0,.2))"></div>
<div class="t" style="left:588px;top:841.75px;font-size:18px;line-height:22px;color:#333">抢维修...</div>
<div class="t" style="left:720px;top:841.75px;font-size:18.5px;line-height:22px;color:#3f86f0">办理中</div>
<div class="a" style="left:825px;top:543px;width:13px;height:331px;background:#f3f3f3"></div>
<div class="a" style="left:828px;top:546px;width:8px;height:251px;background:#cfcfcf"></div>
<div class="a" style="left:276px;top:874px;width:562px;height:13px;background:#f3f3f3;border-radius:0 0 4px 4px"></div>
<div class="a" style="left:278px;top:876px;width:288px;height:9px;background:#d2d2d2"></div>
<div class="a" style="left:1181px;top:435px;width:211px;height:53px;background:#f0f4fb"></div>
<div class="t" style="left:1202px;top:450px;font-size:18px;line-height:22px;color:#555">户表增势</div>
<div class="t" style="left:1298px;top:450px;font-size:18px;line-height:22px;color:#3f86f0">卡表状态</div>
<div class="a" style="left:1253px;top:520px;width:30px;height:16px;border-radius:3px;background:#3f8ff0"></div>
<div class="t" style="left:1291px;top:519px;font-size:16px;line-height:18px;color:#4a4a4a;-webkit-text-stroke-width:0.1px">正常</div>
<div class="a" style="left:1253px;top:554px;width:30px;height:16px;border-radius:3px;background:#0fcba4"></div>
<div class="t" style="left:1291px;top:553px;font-size:16px;line-height:18px;color:#4a4a4a;-webkit-text-stroke-width:0.1px">销户</div>
<div class="a" style="left:1253px;top:588px;width:30px;height:16px;border-radius:3px;background:#ffa42a"></div>
<div class="t" style="left:1291px;top:587px;font-size:16px;line-height:18px;color:#4a4a4a;-webkit-text-stroke-width:0.1px">报停</div>
<div class="a" style="left:1253px;top:622px;width:30px;height:16px;border-radius:3px;background:#a55ef7"></div>
<div class="t" style="left:1291px;top:621px;font-size:16px;line-height:18px;color:#4a4a4a;-webkit-text-stroke-width:0.1px">欠费停水</div>
<svg class="a" style="left:0;top:0;pointer-events:none" width="2020" height="1042">
<path d="M1137.48 616.61 A99.3 99.3 0 1 1 1109.28 619.33 L1111.77 629.53 A88.8 88.8 0 1 0 1136.98 627.10Z" fill="#418ff0" stroke="#418ff0" stroke-width="6" stroke-linejoin="round"/>
<path d="M1118.37 618.06 A98.8 98.8 0 0 1 1128.66 617.09 L1129.06 626.58 A89.3 89.3 0 0 0 1119.75 627.46Z" fill="#10cca5" stroke="#10cca5" stroke-width="7" stroke-linejoin="round"/>
<polyline points="1023,592.5 1132.5,592.5 1132.5,612" stroke="#a55ef7" stroke-width="1.3" fill="none"/>
<polyline points="1013,621.5 1116,614" stroke="#ffa42a" stroke-width="1.3" fill="none"/>
<polyline points="1013,651.5 1076,629" stroke="#10cca5" stroke-width="1.3" fill="none"/>
<polyline points="1143,819 1143,837.5 1242,837.5" stroke="#418ff0" stroke-width="1.3" fill="none"/>
<line x1="385" y1="1006.5" x2="1388" y2="1006.5" stroke="#e3e8ef" stroke-width="1.2"/>
</svg>
<div class="t" style="left:921px;top:583px;font-size:16px;line-height:18px;color:#4a4a4a;-webkit-text-stroke-width:0.1px">欠费停水: 0%</div>
<div class="t" style="left:921px;top:612px;font-size:16px;line-height:18px;color:#4a4a4a;-webkit-text-stroke-width:0.1px">报停: 0.02%</div>
<div class="t" style="left:921px;top:641px;font-size:16px;line-height:18px;color:#4a4a4a;-webkit-text-stroke-width:0.1px">销户: 3.16%</div>
<div class="t" style="left:1249px;top:827px;font-size:16px;line-height:18px;color:#4a4a4a;-webkit-text-stroke-width:0.1px">正常: 96.82%</div>
<div class="t" style="left:1875px;top:447px;font-size:17px;line-height:22px;color:#666">最高<span style="font-size:19px;letter-spacing:2px">1–10</span>名</div>
<div class="a" style="left:1427px;top:492px;width:568px;height:51px;background:#eff4fb"></div>
<div class="t" style="left:1448px;top:507px;font-size:18px;line-height:22px;color:#5c6f8c">排名</div>
<div class="t" style="left:1536px;top:507px;font-size:18px;line-height:22px;color:#5c6f8c">用户名称</div>
<div class="t" style="left:1653px;top:507px;font-size:18px;line-height:22px;color:#5c6f8c">用水量（吨）</div>
<div class="t" style="left:1829px;top:507px;font-size:18px;line-height:22px;color:#5c6f8c">金额（元）</div>
<div class="a" style="left:0;top:0;width:2020px;height:874px;overflow:hidden">
<div class="a" style="left:1427px;top:543px;width:556px;height:57px;background:#fff"></div>
<svg class="a" style="left:1447px;top:552.5px" width="30" height="38" viewBox="0 0 30 38"><defs><radialGradient id="md0" cx="40%" cy="35%" r="70%"><stop offset="0" stop-color="#ffd98f"/><stop offset=".6" stop-color="#fbb347"/><stop offset="1" stop-color="#f39a24"/></radialGradient></defs><path d="M8 13 L8.5 4 L12 8.5 L15 1.5 L18 8.5 L21.5 4 L22 13Z" fill="#ffd98f" opacity=".75"/><circle cx="15" cy="24" r="13.8" fill="url(#md0)"/><path d="M4.5 28 A11 11 0 0 0 25.5 28" stroke="#fff" stroke-opacity=".35" stroke-width="1.2" fill="none"/><text x="15" y="29.5" text-anchor="middle" font-size="15" font-weight="bold" fill="#f39a24" font-family="Liberation Sans" style="filter:brightness(.55)">1</text></svg>
<div class="a" style="left:1525px;top:563.5px;width:76px;height:16px;filter:blur(0.7px);background:linear-gradient(180deg,transparent 0 1px,rgba(60,60,60,.6) 1px 2.5px,rgba(150,150,150,.35) 2.5px 6px,rgba(70,70,70,.55) 6px 7.5px,rgba(150,150,150,.35) 7.5px 11px,rgba(70,70,70,.5) 11px 12.5px,rgba(160,160,160,.3) 12.5px 15px,transparent 15px);-webkit-mask-image:linear-gradient(90deg,rgba(0,0,0,.4),#000 10%,#000 85%,rgba(0,0,0,.3))"></div>
<div class="t" style="left:1653px;top:561.5px;font-size:19.5px;line-height:22px;color:#333">92</div>
<div class="a" style="left:1719px;top:568.0px;width:67px;height:11px;border-radius:6px;background:#eef3fa"><div style="width:67.0px;height:11px;border-radius:6px;background:#45a5ec"></div></div>
<div class="t" style="left:1829px;top:561.5px;font-size:19.5px;line-height:22px;color:#333">368</div>
<div class="a" style="left:1427px;top:600px;width:556px;height:57px;background:#f7f8fa"></div>
<svg class="a" style="left:1447px;top:609.5px" width="30" height="38" viewBox="0 0 30 38"><defs><radialGradient id="md1" cx="40%" cy="35%" r="70%"><stop offset="0" stop-color="#ededed"/><stop offset=".6" stop-color="#cfcfcf"/><stop offset="1" stop-color="#a9a9a9"/></radialGradient></defs><path d="M8 13 L8.5 4 L12 8.5 L15 1.5 L18 8.5 L21.5 4 L22 13Z" fill="#ededed" opacity=".75"/><circle cx="15" cy="24" r="13.8" fill="url(#md1)"/><path d="M4.5 28 A11 11 0 0 0 25.5 28" stroke="#fff" stroke-opacity=".35" stroke-width="1.2" fill="none"/><text x="15" y="29.5" text-anchor="middle" font-size="15" font-weight="bold" fill="#a9a9a9" font-family="Liberation Sans" style="filter:brightness(.55)">2</text></svg>
<div class="a" style="left:1525px;top:620.5px;width:76px;height:16px;filter:blur(0.7px);background:linear-gradient(180deg,transparent 0 1px,rgba(60,60,60,.6) 1px 2.5px,rgba(150,150,150,.35) 2.5px 6px,rgba(70,70,70,.55) 6px 7.5px,rgba(150,150,150,.35) 7.5px 11px,rgba(70,70,70,.5) 11px 12.5px,rgba(160,160,160,.3) 12.5px 15px,transparent 15px);-webkit-mask-image:linear-gradient(90deg,rgba(0,0,0,.4),#000 10%,#000 85%,rgba(0,0,0,.3))"></div>
<div class="t" style="left:1653px;top:618.5px;font-size:19.5px;line-height:22px;color:#333">60</div>
<div class="a" style="left:1719px;top:625.0px;width:67px;height:11px;border-radius:6px;background:#eef3fa"><div style="width:43.7px;height:11px;border-radius:6px;background:#45a5ec"></div></div>
<div class="t" style="left:1829px;top:618.5px;font-size:19.5px;line-height:22px;color:#333">240</div>
<div class="a" style="left:1427px;top:657px;width:556px;height:56px;background:#fff"></div>
<svg class="a" style="left:1447px;top:666.0px" width="30" height="38" viewBox="0 0 30 38"><defs><radialGradient id="md2" cx="40%" cy="35%" r="70%"><stop offset="0" stop-color="#f8c9b8"/><stop offset=".6" stop-color="#eea48d"/><stop offset="1" stop-color="#dd8468"/></radialGradient></defs><path d="M8 13 L8.5 4 L12 8.5 L15 1.5 L18 8.5 L21.5 4 L22 13Z" fill="#f8c9b8" opacity=".75"/><circle cx="15" cy="24" r="13.8" fill="url(#md2)"/><path d="M4.5 28 A11 11 0 0 0 25.5 28" stroke="#fff" stroke-opacity=".35" stroke-width="1.2" fill="none"/><text x="15" y="29.5" text-anchor="middle" font-size="15" font-weight="bold" fill="#dd8468" font-family="Liberation Sans" style="filter:brightness(.55)">3</text></svg>
<div class="a" style="left:1525px;top:677.0px;width:76px;height:16px;filter:blur(0.7px);background:linear-gradient(180deg,transparent 0 1px,rgba(60,60,60,.6) 1px 2.5px,rgba(150,150,150,.35) 2.5px 6px,rgba(70,70,70,.55) 6px 7.5px,rgba(150,150,150,.35) 7.5px 11px,rgba(70,70,70,.5) 11px 12.5px,rgba(160,160,160,.3) 12.5px 15px,transparent 15px);-webkit-mask-image:linear-gradient(90deg,rgba(0,0,0,.4),#000 10%,#000 85%,rgba(0,0,0,.3))"></div>
<div class="a" style="left:1594px;top:689.5px;width:16px;height:3px;background-image:radial-gradient(circle,#444 1px,transparent 1.3px);background-size:5.5px 3px"></div>
<div class="t" style="left:1653px;top:675.0px;font-size:19.5px;line-height:22px;color:#333">32</div>
<div class="a" style="left:1719px;top:681.5px;width:67px;height:11px;border-radius:6px;background:#eef3fa"><div style="width:23.3px;height:11px;border-radius:6px;background:#45a5ec"></div></div>
<div class="t" style="left:1829px;top:675.0px;font-size:19.5px;line-height:22px;color:#333">128</div>
<div class="a" style="left:1427px;top:713px;width:556px;height:48px;background:#f7f8fa"></div>
<div class="t" style="left:1448px;top:727.0px;font-size:19.5px;line-height:22px;color:#333">4</div>
<div class="a" style="left:1525px;top:729.0px;width:76px;height:16px;filter:blur(0.7px);background:linear-gradient(180deg,transparent 0 1px,rgba(60,60,60,.6) 1px 2.5px,rgba(150,150,150,.35) 2.5px 6px,rgba(70,70,70,.55) 6px 7.5px,rgba(150,150,150,.35) 7.5px 11px,rgba(70,70,70,.5) 11px 12.5px,rgba(160,160,160,.3) 12.5px 15px,transparent 15px);-webkit-mask-image:linear-gradient(90deg,rgba(0,0,0,.4),#000 10%,#000 85%,rgba(0,0,0,.3))"></div>
<div class="t" style="left:1653px;top:727.0px;font-size:19.5px;line-height:22px;color:#333">10</div>
<div class="a" style="left:1719px;top:733.5px;width:67px;height:11px;border-radius:6px;background:#eef3fa"><div style="width:7.3px;height:11px;border-radius:6px;background:#45a5ec"></div></div>
<div class="t" style="left:1829px;top:727.0px;font-size:19.5px;line-height:22px;color:#333">40</div>
<div class="a" style="left:1427px;top:761px;width:556px;height:47px;background:#fff"></div>
<div class="t" style="left:1448px;top:774.5px;font-size:19.5px;line-height:22px;color:#333">5</div>
<div class="a" style="left:1525px;top:776.5px;width:76px;height:16px;filter:blur(0.7px);background:linear-gradient(180deg,transparent 0 1px,rgba(60,60,60,.6) 1px 2.5px,rgba(150,150,150,.35) 2.5px 6px,rgba(70,70,70,.55) 6px 7.5px,rgba(150,150,150,.35) 7.5px 11px,rgba(70,70,70,.5) 11px 12.5px,rgba(160,160,160,.3) 12.5px 15px,transparent 15px);-webkit-mask-image:linear-gradient(90deg,rgba(0,0,0,.4),#000 10%,#000 85%,rgba(0,0,0,.3))"></div>
<div class="t" style="left:1653px;top:774.5px;font-size:19.5px;line-height:22px;color:#333">9</div>
<div class="a" style="left:1719px;top:781.0px;width:67px;height:11px;border-radius:6px;background:#eef3fa"><div style="width:7.0px;height:11px;border-radius:6px;background:#45a5ec"></div></div>
<div class="t" style="left:1829px;top:774.5px;font-size:19.5px;line-height:22px;color:#333">36</div>
<div class="a" style="left:1427px;top:808px;width:556px;height:47px;background:#f7f8fa"></div>
<div class="t" style="left:1448px;top:821.5px;font-size:19.5px;line-height:22px;color:#333">6</div>
<div class="a" style="left:1525px;top:823.5px;width:55px;height:16px;filter:blur(0.7px);background:linear-gradient(180deg,transparent 0 1px,rgba(60,60,60,.6) 1px 2.5px,rgba(150,150,150,.35) 2.5px 6px,rgba(70,70,70,.55) 6px 7.5px,rgba(150,150,150,.35) 7.5px 11px,rgba(70,70,70,.5) 11px 12.5px,rgba(160,160,160,.3) 12.5px 15px,transparent 15px);-webkit-mask-image:linear-gradient(90deg,rgba(0,0,0,.4),#000 10%,#000 85%,rgba(0,0,0,.3))"></div>
<div class="t" style="left:1653px;top:821.5px;font-size:19.5px;line-height:22px;color:#333">8</div>
<div class="a" style="left:1719px;top:828.0px;width:67px;height:11px;border-radius:6px;background:#eef3fa"><div style="width:7.0px;height:11px;border-radius:6px;background:#45a5ec"></div></div>
<div class="t" style="left:1829px;top:821.5px;font-size:19.5px;line-height:22px;color:#333">32</div>
<div class="a" style="left:1427px;top:855px;width:556px;height:47px;background:#fff"></div>
<div class="t" style="left:1448px;top:868.5px;font-size:19.5px;line-height:22px;color:#333">7</div>
<div class="t" style="left:1536px;top:868.5px;font-size:18px;line-height:22px;color:#333">刘家莹</div>
<div class="t" style="left:1653px;top:868.5px;font-size:19.5px;line-height:22px;color:#333">6</div>
<div class="a" style="left:1719px;top:875.0px;width:67px;height:11px;border-radius:6px;background:#eef3fa"><div style="width:7.0px;height:11px;border-radius:6px;background:#45a5ec"></div></div>
<div class="t" style="left:1829px;top:868.5px;font-size:19.5px;line-height:22px;color:#333">24</div>
</div>
<div class="a" style="left:1427px;top:874px;width:568px;height:13px;background:#f3f3f3;border-radius:0 0 4px 4px"></div>
<div class="a" style="left:1983px;top:543px;width:12px;height:331px;background:#f3f3f3"></div>
<div class="a" style="left:1985px;top:546px;width:8px;height:212px;background:#cfcfcf"></div>
<div class="t" style="left:346px;top:967px;font-size:15px;line-height:20px;color:#666;-webkit-text-stroke-width:0">单位（元）</div>
<div class="t" style="left:302px;top:996px;font-size:16px;line-height:18px;color:#555;-webkit-text-stroke-width:0.1px">6,000,000</div>
<div class="a" style="left:672px;top:1018px;width:13px;height:8px;border-radius:2px 2px 0 0;background:#418ff0"></div>
<div class="a" style="left:1765px;top:995px;width:31px;height:16px;border-radius:3px;background:#418ff0"></div>
<div class="t" style="left:1803px;top:993px;font-size:16px;line-height:20px;color:#4a4a4a;-webkit-text-stroke-width:0.1px">居民用水（生... 86.44%</div>
<!--/MID-->
 <!-- scrollbar page -->
 <div class="a" style="left:1995px;top:183px;width:14px;height:843px;background:#f3f3f3"></div>
 <div class="a" style="left:1998px;top:183px;width:8px;height:600px;background:#d3d3d3"></div>
</div>
</body></html>
